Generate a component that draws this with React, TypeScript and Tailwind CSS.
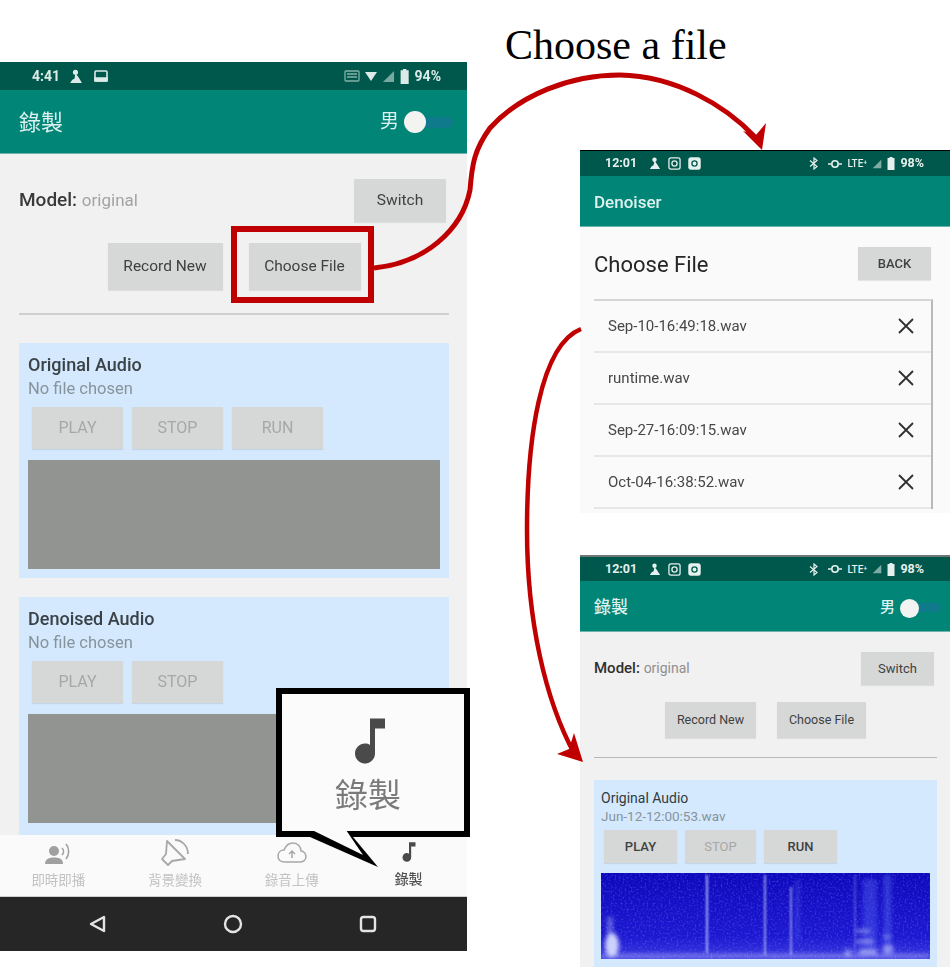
import React from 'react';

const FONT = "font-['Roboto','Noto_Sans_CJK_TC',sans-serif]";

const NOTE = 'M12 3v10.55c-.59-.34-1.27-.55-2-.55-2.21 0-4 1.79-4 4s1.79 4 4 4 4-1.79 4-4V7h4V3h-6z';

// status bar glyphs, all tiny
const Snow = ({ s }: { s: number }) => (
  <svg width={s} height={s} viewBox="0 0 14 14" fill="currentColor">
    <circle cx="7" cy="3" r="2.4" />
    <path d="M7 4 L10 8 L13 13 H2 L4 10 L6 9 Z" />
  </svg>
);

const RoundedSquare = ({ s, filled }: { s: number; filled?: boolean }) => (
  <svg width={s} height={s} viewBox="0 0 14 14" fill="none" stroke="currentColor" strokeWidth="1.4">
    <rect x="1" y="1" width="12" height="12" rx="2" fill={filled ? 'currentColor' : 'none'} />
    {filled ? <circle cx="7" cy="7" r="2.8" stroke="#00574b" /> : <circle cx="7" cy="7" r="2.8" />}
  </svg>
);

const Signal = ({ s }: { s: number }) => (
  <svg width={s} height={s} viewBox="0 0 14 14" fill="currentColor" opacity="0.55">
    <path d="M13 1 V13 H1 Z" />
  </svg>
);

const Battery = ({ h }: { h: number }) => (
  <svg width={h * 0.62} height={h} viewBox="0 0 8 13" fill="currentColor">
    <path d="M2.5 0 H5.5 V1 H7.5 V13 H0.5 V1 H2.5 Z" />
  </svg>
);

const OldStatus = () => (
  <div className="h-[28px] shrink-0 bg-[#00574b] text-[#dcebe8] flex items-center justify-between pl-[32px] pr-[26px] text-[14px] font-bold">
    <div className="flex items-center gap-[8px]">
      <span>4:41</span>
      <Snow s={15} />
      <svg className="ml-[3px]" width="14" height="14" viewBox="0 0 14 14" fill="none" stroke="currentColor" strokeWidth="1.6">
        <rect x="1" y="2" width="12" height="10" rx="1" />
        <path d="M1 9 H13 V12 H1 Z" fill="currentColor" />
      </svg>
    </div>
    <div className="flex items-center gap-[5px]">
      <svg width="16" height="14" viewBox="0 0 16 14" fill="none" stroke="currentColor" strokeWidth="1.3" opacity="0.6">
        <rect x="1" y="2" width="14" height="10" rx="1" />
        <path d="M3 5 H13 M3 8 H13" />
      </svg>
      <svg width="12" height="12" viewBox="0 0 12 12" fill="currentColor">
        <path d="M0 2 H12 L6 11 Z" />
      </svg>
      <Signal s={13} />
      <Battery h={15} />
      <span>94%</span>
    </div>
  </div>
);

const NewStatus = ({ h }: { h: number }) => (
  <div className={`${h === 25 ? 'h-[25px]' : 'h-[24px]'} shrink-0 bg-[#00574b] text-[#e6f0ee] flex items-center justify-between pl-[25px] pr-[26px] text-[12.5px] font-bold`}>
    <div className="flex items-center gap-[7px]">
      <span className="mr-[4px]">12:01</span>
      <Snow s={13} />
      <RoundedSquare s={13} />
      <RoundedSquare s={13} filled />
    </div>
    <div className="flex items-center gap-[5px]">
      <svg width="12" height="13" viewBox="0 0 12 13" fill="none" stroke="currentColor" strokeWidth="1.2">
        <path d="M2 3.5 L9 9.5 L6 12 V1 L9 3.5 L2 9.5" />
      </svg>
      <svg className="ml-[3px]" width="14" height="12" viewBox="0 0 14 12" fill="none" stroke="currentColor" strokeWidth="1.6">
        <circle cx="7" cy="6" r="3.2" />
        <path d="M0 6 H3 M11 6 H14" />
      </svg>
      <span className="text-[10px] font-medium">LTE⁺</span>
      <Signal s={10} />
      <Battery h={13} />
      <span>98%</span>
    </div>
  </div>
);

const Toggle = ({ big }: { big?: boolean }) => (
  <div className={`relative ${big ? 'w-[49px] h-[24px]' : 'w-[41px] h-[20px]'} flex items-center justify-end`}>
    <div className={`${big ? 'w-[32px] h-[11px]' : 'w-[28px] h-[9px]'} rounded-full bg-[#0f7a8c]`} />
    <div className={`absolute left-0 ${big ? 'top-[1px] w-[22px] h-[22px]' : 'top-[1px] w-[19px] h-[19px]'} rounded-full bg-[#f3f3f1]`} />
  </div>
);

const AppBar = ({ title, big, toggle }: { title: string; big?: boolean; toggle?: boolean }) => (
  <div
    className={`shrink-0 bg-[#008577] text-[#dff1ee] flex items-center justify-between border-b border-[#6db5ab] ${
      big ? 'h-[64px] pl-[19px] pr-[14px] text-[22px] pt-[1px]' : 'h-[51px] pl-[14px] pr-[9px] text-[17px] font-medium pt-[3px]'
    }`}
  >
    <span>{title}</span>
    {toggle && (
      <div className="flex items-center gap-[5px]">
        <span className={big ? 'text-[19px]' : 'text-[15px]'}>男</span>
        <Toggle big={big} />
      </div>
    )}
  </div>
);

type BtnProps = { label: string; w: string; h: string; text: string; dim?: boolean };

const Btn = ({ label, w, h, text, dim }: BtnProps) => (
  <div className={`${w} ${h} ${text} ${dim ? 'text-[#a6a8a7]' : 'text-[#3f4241]'} bg-[#d6d7d7] shadow-[0_1px_1px_rgba(0,0,0,0.08)] flex items-center justify-center shrink-0`}>
    {label}
  </div>
);

const PersonVoice = () => (
  <svg width="30" height="26" viewBox="0 0 30 26" fill="#a0a0a0">
    <circle cx="11" cy="11" r="5" />
    <path d="M2 24 C2 18 8 17.5 11 17.5 C15 17.5 20 18 20 24 Z" />
    <path d="M19 8 C21 10 21 13 19 15 M23 4 C26.5 8 26.5 15 23 19" fill="none" stroke="#a0a0a0" strokeWidth="1.6" />
  </svg>
);

const SpeakerOff = () => (
  <svg width="30" height="30" viewBox="0 0 30 30" fill="none" stroke="#a8a8a8" strokeWidth="1.8">
    <path d="M7 3 L25 21 L12 23 L8 27 L2 21 L6 16 Z" strokeLinejoin="round" />
    <path d="M15 2 C22 2 28 8 28 16" />
  </svg>
);

const CloudUp = () => (
  <svg width="30" height="24" viewBox="0 0 30 24" fill="none" stroke="#a8a8a8" strokeWidth="1.5">
    <path d="M8 21 C3 21 1 18 1 15 C1 11 4 9 7 9 C9 4 13 2 16 2 C21 2 24 6 24 10 C27 10 29 13 29 16 C29 19 26 21 23 21 Z" />
    <path d="M15 17 V10 M12 13 L15 10 L18 13" />
  </svg>
);

const NavItem = ({ label, icon, active }: { label: string; icon: React.ReactNode; active?: boolean }) => (
  <div className={`flex-1 flex flex-col items-center justify-end pb-[6px] ${active ? 'text-[14px] text-[#505050] font-medium' : 'text-[13.5px] text-[#c2c2c2]'}`}>
    <div className="h-[34px] flex items-center justify-center">{icon}</div>
    <span>{label}</span>
  </div>
);

const BottomNav = () => (
  <div className="h-[62px] shrink-0 bg-[#fafafa] flex border-b border-[#cfcfcf]">
    <NavItem label="即時即播" icon={<PersonVoice />} />
    <NavItem label="背景變換" icon={<SpeakerOff />} />
    <NavItem label="錄音上傳" icon={<CloudUp />} />
    <NavItem
      label="錄製"
      active
      icon={
        <svg width="26" height="26" viewBox="0 0 24 24" fill="#4a4a4a">
          <path d={NOTE} />
        </svg>
      }
    />
  </div>
);

const SystemNav = () => (
  <div className="h-[54px] shrink-0 bg-[#262626] flex items-center text-[#e4e4e4] pl-[88px] gap-[115px]">
    <svg width="20" height="20" viewBox="0 0 20 20" fill="none" stroke="currentColor" strokeWidth="2.4" strokeLinejoin="round">
      <path d="M16 3 V17 L3 10 Z" />
    </svg>
    <svg width="20" height="20" viewBox="0 0 20 20" fill="none" stroke="currentColor" strokeWidth="2.4">
      <circle cx="10" cy="10" r="8" />
    </svg>
    <svg width="20" height="20" viewBox="0 0 20 20" fill="none" stroke="currentColor" strokeWidth="2.4">
      <rect x="3" y="3" width="14" height="14" rx="2.5" />
    </svg>
  </div>
);

const AudioCard = ({ title, run, h }: { title: string; run?: boolean; h: string }) => (
  <div className={`${h} bg-[#d4e9fd] px-[9px] pt-[11px] shrink-0`}>
    <div className="text-[18px] leading-[22px] font-medium text-[#3b4247]">{title}</div>
    <div className="text-[16.5px] leading-[24px] text-[#86949c] mt-[1px]">No file chosen</div>
    <div className="flex gap-[9px] ml-[4px] mt-[6px]">
      <Btn label="PLAY" w="w-[91px]" h="h-[42px]" text="text-[16px]" dim />
      <Btn label="STOP" w="w-[91px]" h="h-[42px]" text="text-[16px]" dim />
      {run && <Btn label="RUN" w="w-[91px]" h="h-[42px]" text="text-[16px]" dim />}
    </div>
    <div className="h-[109px] bg-[#929491] mt-[11px]" />
  </div>
);

const LeftPhone = () => (
  <div className={`absolute left-0 top-[62px] w-[467px] h-[889px] flex flex-col overflow-hidden blur-[0.6px] ${FONT}`}>
    <OldStatus />
    <AppBar title="錄製" big toggle />
    <div className="flex-1 min-h-0 overflow-hidden bg-[#f1f1f1] pl-[19px] pr-[18px]">
      <div className="flex items-center justify-between pt-[25px] pr-[3px]">
        <div className="text-[19px]">
          <span className="font-medium text-[#3a3a3a]">Model: </span>
          <span className="text-[17px] text-[#a3a3a3]">original</span>
        </div>
        <Btn label="Switch" w="w-[92px]" h="h-[43px]" text="text-[15.5px]" />
      </div>
      <div className="flex justify-center gap-[26px] mt-[21px]">
        <Btn label="Record New" w="w-[115px]" h="h-[47px]" text="text-[15.5px]" />
        <Btn label="Choose File" w="w-[112px]" h="h-[47px]" text="text-[15.5px]" />
      </div>
      <div className="h-[2px] bg-[#cfcfcf] mt-[23px]" />
      <div className="flex flex-col gap-[19px] mt-[28px]">
        <AudioCard title="Original Audio" run h="h-[235px]" />
        <AudioCard title="Denoised Audio" h="h-[238px]" />
      </div>
    </div>
    <BottomNav />
    <SystemNav />
  </div>
);

const FileRow = ({ name }: { name: string }) => (
  <div className="h-[52px] flex items-center justify-between pl-[14px] pr-[16px] border-b-2 border-[#e7e7e7] text-[15px] text-[#474747]">
    <span>{name}</span>
    <svg width="18" height="18" viewBox="0 0 18 18" stroke="#303030" strokeWidth="1.8">
      <path d="M2 2 L16 16 M16 2 L2 16" />
    </svg>
  </div>
);

const ChooseFilePhone = () => (
  <div className={`absolute left-[580px] top-[150px] w-[370px] h-[363px] flex flex-col overflow-hidden blur-[0.35px] ${FONT}`}>
    <div className="h-[1px] shrink-0 bg-black" />
    <NewStatus h={25} />
    <AppBar title="Denoiser" />
    <div className="flex-1 min-h-0 bg-[#fafafa] pl-[14px] pr-[17px] overflow-hidden">
      <div className="flex items-center justify-between pt-[20px] pb-[19px] pr-[2px]">
        <span className="text-[22px] text-[#262626] relative top-[1px]">Choose File</span>
        <Btn label="BACK" w="w-[73px]" h="h-[33px]" text="text-[13px] font-medium" />
      </div>
      <div className="border-t-2 border-r-2 border-t-[#d6d6d6] border-r-[#b9b9b9]">
        <FileRow name="Sep-10-16:49:18.wav" />
        <FileRow name="runtime.wav" />
        <FileRow name="Sep-27-16:09:15.wav" />
        <FileRow name="Oct-04-16:38:52.wav" />
      </div>
    </div>
  </div>
);

const Spectrogram = () => (
  <svg className="block w-[329px] h-[86px] mt-[10px] ml-[7px]" viewBox="0 0 329 86" preserveAspectRatio="none">
    <defs>
      <linearGradient id="spec" x1="0" y1="0" x2="0" y2="1">
        <stop offset="0" stopColor="#0d08bc" />
        <stop offset="0.75" stopColor="#1c18d2" />
        <stop offset="1" stopColor="#3a3ae0" />
      </linearGradient>
      <filter id="soft" x="-30%" y="-30%" width="160%" height="160%">
        <feGaussianBlur stdDeviation="2" />
      </filter>
      <filter id="soft2" x="-30%" y="-10%" width="160%" height="120%">
        <feGaussianBlur stdDeviation="0.9" />
      </filter>
      <filter id="grain">
        <feTurbulence type="fractalNoise" baseFrequency="0.5" numOctaves="2" seed="4" />
        <feColorMatrix values="0 0 0 0 0.4  0 0 0 0 0.4  0 0 0 0 1  0 0 0 1.5 -0.7" />
      </filter>
    </defs>
    <rect width="329" height="86" fill="url(#spec)" />
    <rect width="329" height="86" filter="url(#grain)" opacity="0.45" />
    <g filter="url(#soft2)" fill="#b9c2f5">
      <rect x="105" y="2" width="2" height="78" opacity="0.85" />
      <rect x="163" y="2" width="2" height="80" opacity="0.7" />
      <rect x="189" y="14" width="2" height="68" opacity="0.65" />
      <rect x="253" y="2" width="2" height="78" opacity="0.3" />
    </g>
    <g filter="url(#soft)" fill="#5a6af0">
      <rect x="195" y="8" width="3" height="60" opacity="0.5" />
      <rect x="262" y="6" width="14" height="70" opacity="0.4" />
      <rect x="283" y="2" width="7" height="80" opacity="0.45" />
    </g>
    <g filter="url(#soft)" fill="#dfe4ff">
      <ellipse cx="11" cy="72" rx="7" ry="12" opacity="0.9" />
      <rect x="6" y="44" width="6" height="20" opacity="0.35" />
      <rect x="0" y="81" width="329" height="4" opacity="0.4" />
      <rect x="255" y="56" width="14" height="4" opacity="0.45" />
      <rect x="256" y="66" width="16" height="5" opacity="0.45" />
      <rect x="258" y="76" width="18" height="5" opacity="0.6" />
      <rect x="282" y="62" width="8" height="4" opacity="0.35" />
      <rect x="282" y="72" width="10" height="8" opacity="0.5" />
      <rect x="244" y="76" width="6" height="8" opacity="0.45" />
    </g>
  </svg>
);

const RecordPhone = () => (
  <div className={`absolute left-[580px] top-[555px] w-[370px] h-[412px] flex flex-col overflow-hidden blur-[0.35px] ${FONT}`}>
    <div className="h-[2px] shrink-0 bg-[#6f7775]" />
    <NewStatus h={24} />
    <AppBar title="錄製" toggle />
    <div className="flex-1 min-h-0 bg-[#f1f1f1] pl-[14px] pr-[13px] overflow-hidden">
      <div className="flex items-center justify-between pt-[20px] pr-[3px]">
        <div className="text-[15px]">
          <span className="font-medium text-[#2f2f2f]">Model: </span>
          <span className="text-[14px] text-[#8f8f8f]">original</span>
        </div>
        <Btn label="Switch" w="w-[73px]" h="h-[33px]" text="text-[13px]" />
      </div>
      <div className="flex gap-[21px] mt-[17px] ml-[71px]">
        <Btn label="Record New" w="w-[91px]" h="h-[36px]" text="text-[12.5px]" />
        <Btn label="Choose File" w="w-[89px]" h="h-[36px]" text="text-[12.5px]" />
      </div>
      <div className="h-[1px] bg-[#b8b8b8] mt-[19px]" />
      <div className="bg-[#d4e9fd] mt-[22px] h-[190px] pt-[9px]">
        <div className="pl-[7px] text-[14px] leading-[18px] text-[#333b40]">Original Audio</div>
        <div className="pl-[7px] text-[13.5px] leading-[18px] text-[#87939b]">Jun-12-12:00:53.wav</div>
        <div className="flex gap-[8px] ml-[10px] mt-[5px]">
          <Btn label="PLAY" w="w-[73px]" h="h-[33px]" text="text-[13px] font-medium" />
          <Btn label="STOP" w="w-[71px]" h="h-[33px]" text="text-[13px]" dim />
          <Btn label="RUN" w="w-[73px]" h="h-[33px]" text="text-[13px] font-medium" />
        </div>
        <Spectrogram />
      </div>
    </div>
  </div>
);

const Callout = () => (
  <>
    <div className={`absolute left-[276px] top-[688px] w-[194px] h-[149px] border-[6px] border-black bg-[#fbfbfb] flex flex-col items-center ${FONT}`}>
      <svg className="mt-[17px] -ml-[6px]" width="60" height="60" viewBox="0 0 24 24" fill="#4a4a4a" preserveAspectRatio="xMidYMid meet">
        <path d={NOTE} />
      </svg>
      <span className="text-[33px] leading-[38px] text-[#7a7a7a] mt-[6px] -ml-[10px] blur-[0.4px]">錄製</span>
    </div>
    {/* speech bubble tail */}
    <svg className="absolute left-[300px] top-[826px]" width="90" height="46" viewBox="0 0 90 46">
      <path d="M10 11 L78 41 L53 11 Z" fill="black" />
      <path d="M12 4 L63 29 L46 4 Z" fill="#fbfbfb" />
    </svg>
  </>
);

const Arrows = () => (
  <svg className="absolute left-0 top-0 pointer-events-none" width="950" height="967" viewBox="0 0 950 967" fill="none">
    <path d="M374 268 C425 263 462 230 470 190 C472 165 474 150 490 128 C520 95 570 75 620 75 C675 76 725 105 755 137" stroke="#c00000" strokeWidth="5" />
    <path d="M762 150 L743 131 L756 135 L766 123 Z" fill="#c00000" />
    <path d="M581 329 C540 345 527 440 527 530 C527 620 545 700 575 755" stroke="#c00000" strokeWidth="4.5" />
    <path d="M583 762 L557 754 L569 749 L574 733 Z" fill="#c00000" />
  </svg>
);

export default function App() {
  return (
    <div className="relative w-[950px] h-[967px] bg-white overflow-hidden">
      <LeftPhone />
      <ChooseFilePhone />
      <RecordPhone />
      <div className="absolute left-[505px] top-[20px] text-[42px] leading-[50px] text-black font-['Liberation_Serif',serif]">Choose a file</div>
      <Arrows />
      {/* red box around the button */}
      <div className="absolute left-[231px] top-[226px] w-[143px] h-[77px] border-[6px] border-[#c00000]" />
      <Callout />
    </div>
  );
}
